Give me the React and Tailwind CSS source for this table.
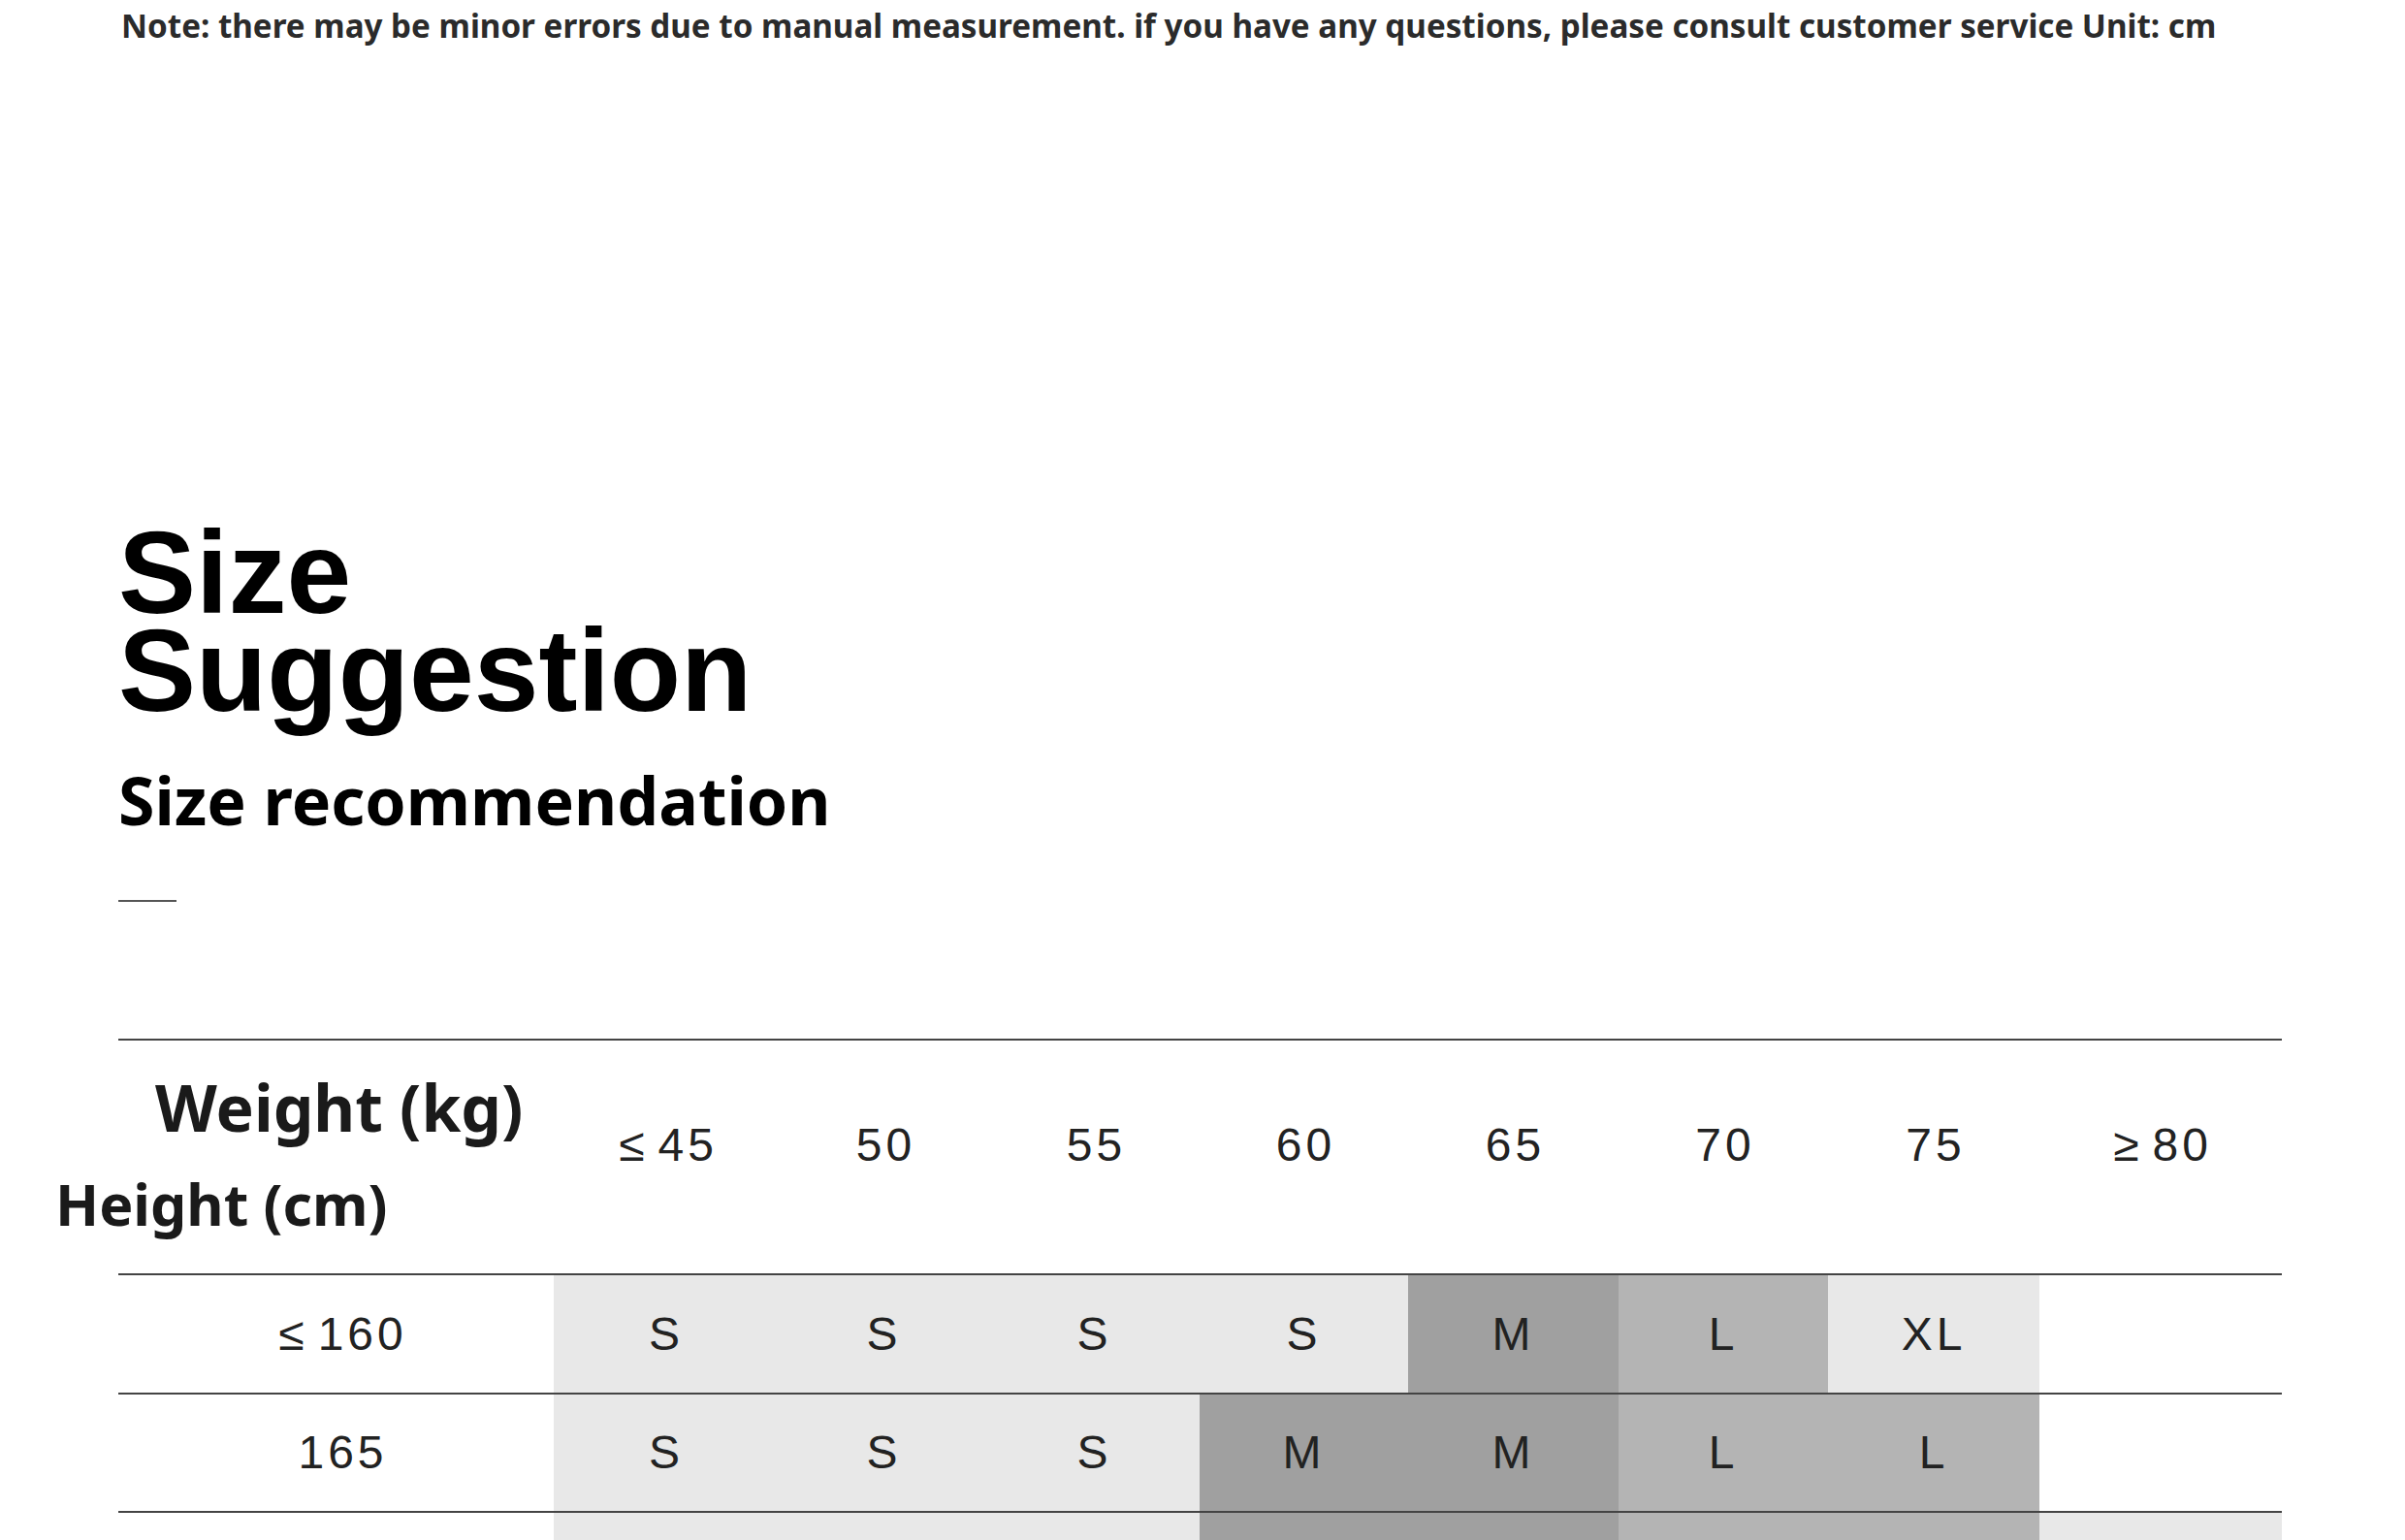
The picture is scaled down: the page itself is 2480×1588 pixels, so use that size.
import React from 'react';

const cols = [
  { label: '45', pre: '≤', w: 'w-[232px]' },
  { label: '50', w: 'w-[217px]' },
  { label: '55', w: 'w-[217px]' },
  { label: '60', w: 'w-[215px]' },
  { label: '65', w: 'w-[217px]' },
  { label: '70', w: 'w-[216px]' },
  { label: '75', w: 'w-[218px]' },
  { label: '80', pre: '≥', w: 'w-[250px]' },
];

const shade = {
  S: 'bg-[#e8e8e8]',
  M: 'bg-[#a0a0a0]',
  L: 'bg-[#b4b4b4]',
  XL: 'bg-[#e8e8e8]',
  '': 'bg-white',
};

const rows = [
  { height: '160', pre: '≤', sizes: ['S', 'S', 'S', 'S', 'M', 'L', 'XL', ''], h: 'h-[123px]' },
  { height: '165', sizes: ['S', 'S', 'S', 'M', 'M', 'L', 'L', ''], h: 'h-[122px]' },
  { height: '170', sizes: ['S', 'S', 'S', 'M', 'M', 'L', 'L', 'XL'], h: 'h-[122px]' },
];

const numFont = "font-['Liberation_Sans',Arial,sans-serif] text-[48px] leading-none text-[#222] tracking-[4px]";

const Num = ({ pre, children }) => (
  <span className="flex items-center">
    {pre && <span className="mr-[10px]">{pre}</span>}
    {children}
  </span>
);

const App = () => {
  return (
    <div className="w-[2480px] min-h-[1588px] bg-white">
      <p className="pl-[125px] font-['Noto_Sans',sans-serif] font-bold text-[33.2px] leading-[54px] text-[#2b2b2b] whitespace-nowrap">
        Note: there may be minor errors due to manual measurement. if you have any questions, please consult customer service Unit: cm
      </p>

      <div className="pl-[122px]">
        <h1 className="mt-[486px] font-['Liberation_Sans',Arial,sans-serif] font-bold text-[120px] leading-[101px] text-black">
          Size
          <br />
          Suggestion
        </h1>
        <h2 className="mt-[48px] font-['Noto_Sans',sans-serif] font-bold text-[68px] leading-[70px] text-black">
          Size recommendation
        </h2>
        <div className="mt-[68px] h-[2px] w-[60px] bg-[#555]" />

        <div className="mt-[141px] w-[2231px]">
          <div className="flex h-[242px] border-t-2 border-[#444]">
            <div className="w-[449px] flex flex-col font-['Noto_Sans',sans-serif] font-bold text-[#1a1a1a]">
              <span className="mt-[34px] pl-[38px] text-[66px] leading-[68px] whitespace-nowrap">Weight (kg)</span>
              <span className="mt-[36px] -ml-[65px] text-[59px] leading-[60px] whitespace-nowrap">Height (cm)</span>
            </div>
            {cols.map((c) => (
              <div key={c.label} className={`${c.w} flex items-center justify-center pb-[24px] pl-[4px] ${numFont}`}>
                <Num pre={c.pre}>{c.label}</Num>
              </div>
            ))}
          </div>

          {rows.map((r) => (
            <div key={r.height} className={`flex ${r.h} border-t-2 border-[#444]`}>
              <div className={`w-[449px] pl-[14px] flex items-center justify-center ${numFont}`}>
                <Num pre={r.pre}>{r.height}</Num>
              </div>
              {r.sizes.map((s, i) => (
                <div key={i} className={`${cols[i].w} ${shade[s]} flex items-center justify-center ${numFont}`}>
                  {s}
                </div>
              ))}
            </div>
          ))}
        </div>
      </div>
    </div>
  );
};

export default App;
